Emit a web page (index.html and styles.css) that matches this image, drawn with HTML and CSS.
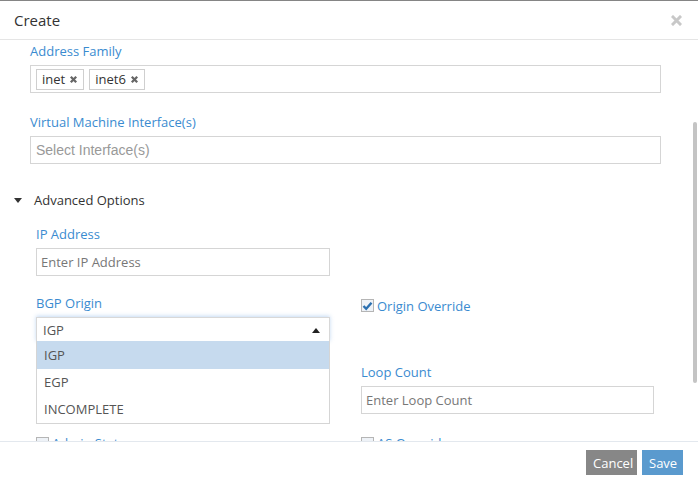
FILE: index.html
```html
<!DOCTYPE html>
<html>
<head>
<meta charset="utf-8">
<link rel="stylesheet" href="styles.css">
</head>
<body>
<div class="modal">
  <div class="modal-header">
    <span class="title">Create</span>
    <svg class="close" width="11" height="11" viewBox="0 0 11 11"><path d="M2 2 L9 9 M9 2 L2 9" stroke="#c8c8c8" stroke-width="3" stroke-linecap="square"/></svg>
  </div>
  <div class="modal-body">
    <div class="form">
      <div class="field">
        <div class="label">Address Family</div>
        <div class="input tags">
          <span class="tag">inet <svg width="9" height="9" viewBox="0 0 9 9"><path d="M1.8 1.8 L7.2 7.2 M7.2 1.8 L1.8 7.2" stroke="#666" stroke-width="2.3"/></svg></span>
          <span class="tag">inet6 <svg width="9" height="9" viewBox="0 0 9 9"><path d="M1.8 1.8 L7.2 7.2 M7.2 1.8 L1.8 7.2" stroke="#666" stroke-width="2.3"/></svg></span>
        </div>
      </div>
      <div class="field">
        <div class="label">Virtual Machine Interface(s)</div>
        <div class="input"><span class="ph-arial">Select Interface(s)</span></div>
      </div>
    </div>
    <div class="adv-head"><span class="caret-down"></span>Advanced Options</div>
    <div class="adv">
      <div class="field">
        <div class="label">IP Address</div>
        <div class="input"><span class="ph">Enter IP Address</span></div>
      </div>
      <div></div>
      <div class="field select-field">
        <div class="label">BGP Origin</div>
        <div class="select"><span>IGP</span><span class="caret-up"></span></div>
        <ul class="dropdown">
          <li class="active">IGP</li>
          <li>EGP</li>
          <li>INCOMPLETE</li>
        </ul>
      </div>
      <div class="check-field">
        <span class="cb checked"><svg width="11" height="10" viewBox="0 0 11 10"><path d="M1.5 5 L4.2 7.8 L9.5 1.8" fill="none" stroke="#2a6fb0" stroke-width="2.4"/></svg></span><span class="cb-label">Origin Override</span>
      </div>
      <div></div>
      <div class="field">
        <div class="label">Loop Count</div>
        <div class="input"><span class="ph">Enter Loop Count</span></div>
      </div>
      <div class="check-field low">
        <span class="cb"></span><span class="cb-label">Admin State</span>
      </div>
      <div class="check-field low">
        <span class="cb"></span><span class="cb-label">AS Override</span>
      </div>
    </div>
    <div class="scroll-thumb"></div>
  </div>
  <div class="modal-footer">
    <button class="btn cancel">Cancel</button>
    <button class="btn save">Save</button>
  </div>
</div>
</body>
</html>
```
FILE: styles.css
```css
* { box-sizing: border-box; }
html, body { margin: 0; padding: 0; background: #fff; }
body { font-family: "Open Sans", "DejaVu Sans", sans-serif; font-size: 13px; color: #333; }
.modal { width: 698px; height: 483px; border-top: 1px solid #858585; display: flex; flex-direction: column; position: relative; overflow: hidden; }
.modal-header { height: 39px; border-bottom: 1px solid #e5e5e5; display: flex; align-items: center; justify-content: space-between; padding: 0 16px 0 14px; flex: none; }
.title { font-size: 15px; color: #333; }
.close { display: block; }
.modal-body { height: 401px; flex: none; overflow: hidden; position: relative; padding-top: 2px; }
.form { padding-left: 30px; width: 661px; }
.field { margin-bottom: 20px; }
.label { color: #3a8bd0; line-height: 18px; height: 18px; margin-bottom: 5px; }
.input { height: 28px; border: 1px solid #d5d5d5; background: #fff; display: flex; align-items: center; padding: 0 4px; }
.tags { padding: 0 5px; gap: 5px; }
.tag { border: 1px solid #cfcfcf; height: 21px; line-height: 19px; padding: 0 5px; display: inline-flex; align-items: center; gap: 4px; color: #333; }
.tag svg { display: block; }
.ph-arial { font-family: "Liberation Sans", Arial, sans-serif; font-size: 14px; color: #999; padding-left: 1px; }
.ph { color: #777; }
.adv-head { margin-top: 27px; padding-left: 14px; line-height: 18px; display: flex; align-items: center; color: #333; }
.caret-down { width: 0; height: 0; border-left: 4px solid transparent; border-right: 4px solid transparent; border-top: 5px solid #333; margin-right: 12px; }
.adv { display: grid; grid-template-columns: 294px 293px; column-gap: 31px; margin-left: 36px; margin-top: 16px; }
.adv .field { margin-bottom: 18px; }
.adv .select-field { position: relative; margin-bottom: 21px; }
.select { height: 25px; border: 1px solid #d8d8d8; border-bottom: none; box-shadow: 0 -1px 4px rgba(90,150,220,0.35); display: flex; align-items: center; justify-content: space-between; padding: 0 9px 0 6px; color: #555; background: #fff; position: relative; z-index: 2; }
.caret-up { width: 0; height: 0; border-left: 4px solid transparent; border-right: 4px solid transparent; border-bottom: 5px solid #222; }
.dropdown { position: absolute; left: 0; top: 47px; width: 294px; margin: 0; padding: 0; list-style: none; background: #fff; border: 1px solid #d5d5d5; border-top: none; z-index: 3; }
.dropdown li { height: 27px; line-height: 27px; padding-left: 7px; color: #555; }
.dropdown li.active { background: #c6daee; height: 28px; line-height: 28px; }
.check-field { display: flex; align-items: center; padding-top: 0; height: 23px; }
.check-field.low { margin-top: -3px; padding-top: 5px; }
.cb { width: 13px; height: 13px; border: 1px solid #b5b5b5; background: #eef2f7; display: inline-flex; align-items: center; justify-content: center; margin-right: 3px; }
.cb svg { display: block; }
.cb-label { color: #3a8bd0; line-height: 18px; }
.scroll-thumb { position: absolute; right: 1px; top: 82px; width: 4px; height: 261px; background: #c4c4c4; border-radius: 2px; }
.modal-footer { border-top: 1px solid #e3e8ee; flex: 1; display: flex; justify-content: flex-end; align-items: flex-start; padding: 8px 15px 0 0; gap: 5px; }
.btn { font-family: "Open Sans", sans-serif; font-size: 13px; height: 25px; border: none; color: #fff; padding: 0 7px; cursor: pointer; }
.cancel { background: #878787; width: 51px; }
.save { background: #5a9ace; width: 41px; }
```
